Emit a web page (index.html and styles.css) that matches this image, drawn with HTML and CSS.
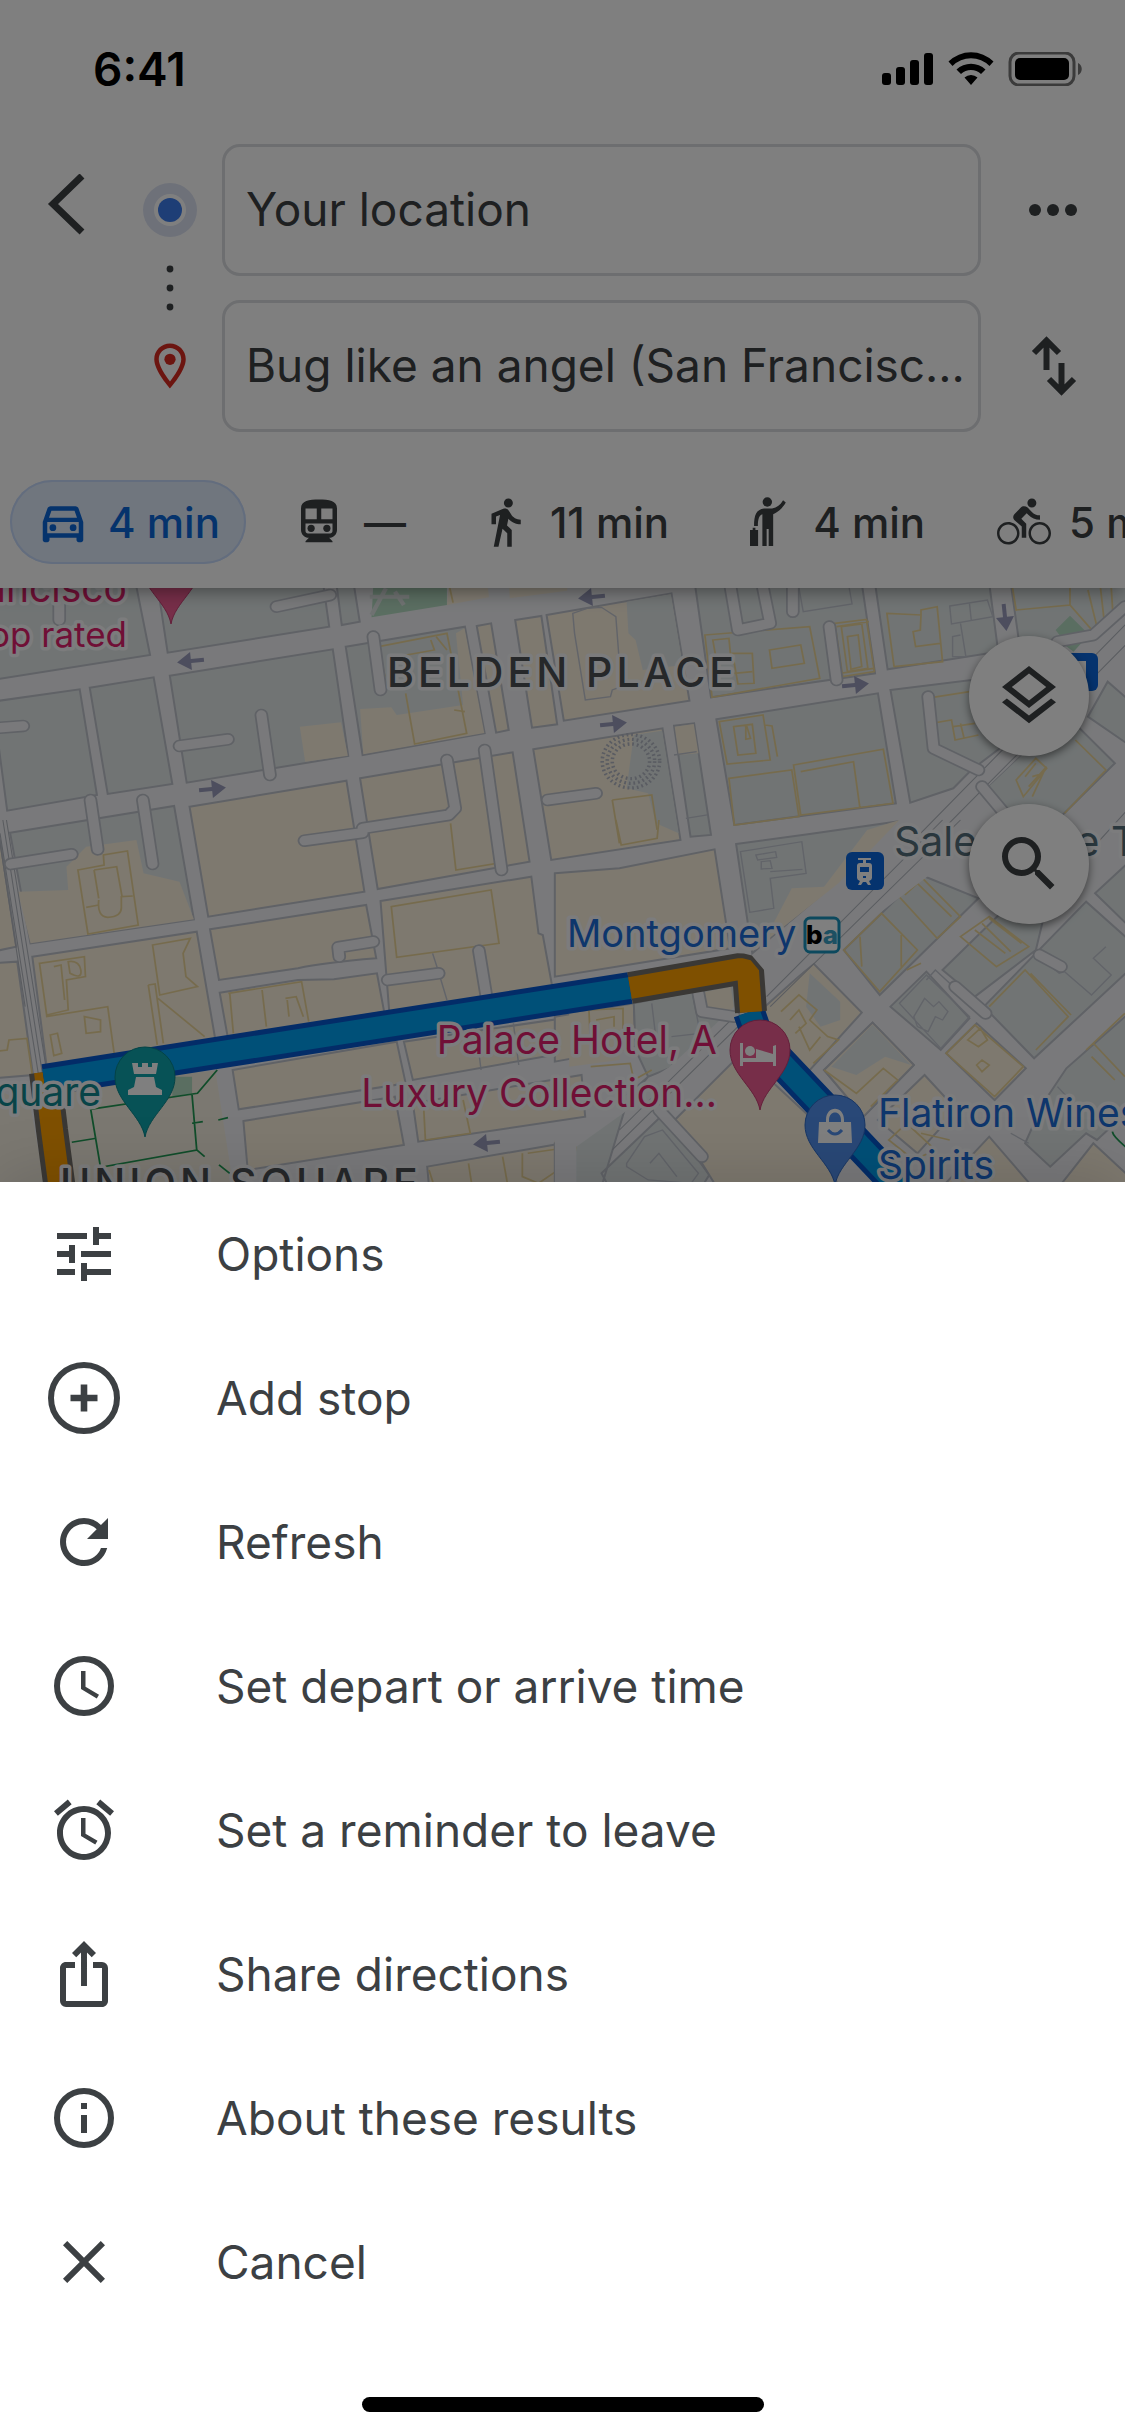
FILE: index.html
```html
<!DOCTYPE html>
<html lang="en">

<head>
    <meta charset="UTF-8">
    <meta name="viewport" content="width=device-width, initial-scale=1.0">
    <title>Directions</title>
    <link rel="stylesheet" href="styles.css">
</head>

<body>
    <div class="backdrop">
        <header class="header">
            <div class="status-bar">
                <span class="clock">6:41</span>
                <svg class="status-icons" width="200" height="34" viewBox="0 0 200 34" aria-hidden="true">
                    <rect x="0" y="21" width="9" height="12" rx="3" />
                    <rect x="14" y="15" width="9" height="18" rx="3" />
                    <rect x="28" y="8" width="9" height="25" rx="3" />
                    <rect x="42" y="1" width="9" height="32" rx="3" />
                    <path d="M66.5 9.500a32 32 0 0 1 45 0l-4 4.500a26 26 0 0 0-37 0zM74.5 17.500a21 21 0 0 1 29 0l-4.500 4.500a14.500 14.500 0 0 0-20 0zM82.5 25.500a9.500 9.500 0 0 1 13 0L89 33z" />
                    <rect class="battery-shell" x="128" y="1" width="64" height="32" rx="9" />
                    <rect x="133" y="6" width="54" height="22" rx="5" />
                    <path class="battery-cap" d="M196 11c5 2 5 10 0 12z" />
                </svg>
            </div>

            <form class="route">
                <button type="button" class="icon-button back" aria-label="Back">
                    <svg width="72" height="72" viewBox="0 0 72 72"><path d="M59 2 30 30l29 28" fill="none" stroke="currentColor" stroke-width="7" /></svg>
                </button>
                <div class="route-line" aria-hidden="true">
                    <svg width="54" height="54" viewBox="0 0 54 54">
                        <circle class="halo" cx="27" cy="27" r="27" />
                        <circle class="ring" cx="27" cy="27" r="16" />
                        <circle class="dot" cx="27" cy="27" r="12" />
                    </svg>
                    <svg width="8" height="48" viewBox="0 0 8 48">
                        <circle cx="4" cy="5" r="3.4" />
                        <circle cx="4" cy="24" r="3.4" />
                        <circle cx="4" cy="43" r="3.4" />
                    </svg>
                    <svg class="pin" width="54" height="54" viewBox="0 0 24 24">
                        <path d="M12 2C8.13 2 5 5.13 5 9c0 5.25 7 13 7 13s7-7.75 7-13c0-3.87-3.13-7-7-7zM7 9c0-2.76 2.24-5 5-5s5 2.24 5 5c0 2.88-2.88 7.19-5 9.88C9.92 16.21 7 11.85 7 9z" />
                        <circle cx="12" cy="9" r="2.5" />
                    </svg>
                </div>
                <input class="field from" type="text" aria-label="Starting point" value="Your location">
                <input class="field to" type="text" aria-label="Destination" value="Bug like an angel (San Francisc...">
                <button type="button" class="icon-button more" aria-label="More options">
                    <svg width="72" height="72" viewBox="0 0 72 72">
                        <circle cx="18" cy="36" r="6" />
                        <circle cx="36" cy="36" r="6" />
                        <circle cx="54" cy="36" r="6" />
                    </svg>
                </button>
                <button type="button" class="icon-button swap" aria-label="Swap start and destination">
                    <svg width="72" height="72" viewBox="0 0 72 72">
                        <path d="M29.5 40V11M17 23l12.500-12.500L42 23M44.5 33v29M32 49l12.500 12.500L57 49" fill="none" stroke="currentColor" stroke-width="6" />
                    </svg>
                </button>
            </form>

            <nav class="modes" aria-label="Travel mode">
                <button type="button" class="mode active">
                    <svg width="54" height="54" viewBox="0 0 24 24">
                        <path d="M18.92 6.01C18.72 5.42 18.16 5 17.5 5h-11c-.66 0-1.21.42-1.42 1.01L3 12v8c0 .55.45 1 1 1h1c.55 0 1-.45 1-1v-1h12v1c0 .55.45 1 1 1h1c.55 0 1-.45 1-1v-8l-2.08-5.99zM6.85 7h10.29l1.08 3.11H5.77L6.85 7zM19 17H5v-5h14v5z" />
                        <circle cx="7.5" cy="14.5" r="1.5" />
                        <circle cx="16.5" cy="14.5" r="1.5" />
                    </svg>
                    4 min
                </button>
                <button type="button" class="mode" aria-label="Transit, no route">
                    <svg width="54" height="54" viewBox="0 0 24 24">
                        <path fill-rule="evenodd" d="M12 2c-4.420 0-8 .5-8 4v9.500C4 17.430 5.570 19 7.500 19L6 20.500v.5h12v-.5L16.500 19c1.930 0 3.500-1.570 3.500-3.500V6c0-3.500-3.580-4-8-4zM6 6h5v4.800H6zM13 6h5v4.800h-5zM6 12.700h12V16c0 .6-.5 1.100-1.100 1.100H7.100C6.500 17.100 6 16.600 6 16z" />
                        <circle cx="8.5" cy="14.8" r="1.6" />
                        <circle cx="15.5" cy="14.8" r="1.6" />
                    </svg>
                    —
                </button>
                <button type="button" class="mode">
                    <svg width="54" height="54" viewBox="0 0 24 24">
                        <path d="M13.5 5.500c1.100 0 2-.9 2-2s-.9-2-2-2-2 .9-2 2 .9 2 2 2zM9.800 8.900L7 23h2.100l1.800-8 2.100 2v6h2v-7.500l-2.100-2 .6-3C14.800 12 16.800 13 19 13v-2c-1.900 0-3.500-1-4.300-2.400l-1-1.600c-.4-.6-1-1-1.700-1-.3 0-.5.1-.8.1L6 8.300V13h2V9.600l1.800-.7" />
                    </svg>
                    11 min
                </button>
                <button type="button" class="mode">
                    <svg width="54" height="54" viewBox="0 0 24 24">
                        <circle cx="11.7" cy="3.1" r="2.1" />
                        <path d="M10.200 6h3.600c2.200-.4 3.700-1.600 4.900-3.700l1.200 1c-1.400 2.400-3.200 4.200-5.600 5.200v14.200h-2v-7.600h-.9v7.600H9.500V8.500c-1.400.6-2 1.900-2 5.300H5.800c0-5 1-7.300 4.400-7.800zM4 15.600h1.200v-1h1.200v1h1.200v7.100H4z" />
                    </svg>
                    4 min
                </button>
                <button type="button" class="mode">
                    <svg width="54" height="54" viewBox="0 0 24 24">
                        <path d="M15.500 5.500c1.100 0 2-.9 2-2s-.9-2-2-2-2 .9-2 2 .9 2 2 2zM5 12c-2.800 0-5 2.200-5 5s2.200 5 5 5 5-2.200 5-5-2.200-5-5-5zm0 8.900c-2.100 0-3.900-1.800-3.900-3.900s1.800-3.900 3.900-3.900 3.900 1.800 3.900 3.900-1.800 3.900-3.900 3.900zm5.800-10.400l2.400-2.400.8.8c1.300 1.300 3 2.100 5.100 2.100V9c-1.500 0-2.700-.6-3.600-1.500l-1.900-1.900c-.5-.4-1-.6-1.600-.6s-1.100.2-1.400.6L7.800 8.400c-.4.4-.6.9-.6 1.400 0 .6.2 1.100.6 1.400L11 14v5h2v-6.200l-2.200-2.300zM19 12c-2.800 0-5 2.200-5 5s2.200 5 5 5 5-2.200 5-5-2.200-5-5-5zm0 8.900c-2.100 0-3.900-1.800-3.900-3.900s1.800-3.900 3.900-3.900 3.900 1.800 3.900 3.900-1.800 3.900-3.900 3.900z" />
                    </svg>
                    5 min
                </button>
            </nav>
        </header>

        <main class="map">
            <svg class="map-canvas" viewBox="0 588 1125 594" preserveAspectRatio="xMidYMid slice" role="img" aria-label="Route map">
                <defs>
                    <path id="alleys-nw" d="M920 405 770 440M165 400v80M-20 805 65 798M500 858 635 838M728 765 752 945M1040 530 1060 690" />
                    <path id="alleys-sw" d="M252-60 272 88M398-60 425 132M30 132 200 103M848 62 1010 38M1010 25 1250-15 1268-35 1245-180M1350-210 1397 150M1080 480 1222 460M1334 392 1355 530M945 410 942 382 1040 365" />
                    <path id="alleys-ne" d="M470 384 490 510 580 490 560 384M643 370V455M765 660 745 500M1020 710 1035 865 1160 930M1568 440 1480 525 1380 545M-40 1020 95 1000M1170 980 1240 1070" />
                    <path id="alleys-se" d="M1095 500 1180 580M380 520 390 575 480 590M270 870 390 1010M1330 405 1390 440" />
                    <path id="marker" d="M0 60C-4 38-30 24-30 0a30 30 0 1 1 60 0C30 24 4 38 0 60z" />
                    <path id="arrow" d="M-13-2H0v-7L14 0 0 9V2h-13z" />
                </defs>
                <rect class="street" x="0" y="588" width="1125" height="594" />

                <!-- north-west -->
                <g transform="translate(0 460) scale(.359 .3333)">
                    <path class="land" d="M-20 370H378L418 585-20 660zM438 370H900L917 500 467 578zM937 370H985L1002 485 952 495zM-20 725 222 688 270 1005 20 1052zM250 683 428 652 480 972 300 1002zM473 647 927 568 970 888 520 968zM963 560 1295 500 1350 820 1010 885z" />
                    <path class="shop" d="M1250 370H1358L1362 412 1245 435zM1417 370H1580V392L1420 415zM835 800 950 787 969 887 850 905zM1003 747 1090 742 1105 765 1290 735 1270 520 1294 505 1349 819 1012 883z" />
                    <path class="park" d="M1040 370H1245V435L1035 472z" />
                    <path class="footway" d="M1030 410H1140M1075 385 1035 465M1100 395 1125 435" />
                    <path class="shop edge" d="M1328 498 1368 490 1417 810 1382 818zM1435 480 1508 468 1552 793 1482 803z" />
                    <path class="building" d="M1055 560 1245 520 1300 820 1155 852 1130 700M1055 560 1072 650M1200 540 1210 570 1080 595M1215 530 1245 570M1265 750 1295 755M1250 370 1262 428" />
                    <use href="#alleys-nw" class="casing" />
                    <use href="#alleys-nw" class="alley" />
                </g>

                <!-- south-west -->
                <g transform="translate(0 820) scale(.359 .3333)">
                    <path class="land" d="M28 38 485-42 540 298 85 370z" />
                    <path class="shop" d="M50 215 190 210 185 140 240 80 380 60 400 160 500 185 540 298 85 370z" />
                    <path class="shop edge" d="M-20 20 0 60 45 380-20 395zM528-40 965-118 1015 215 580 290zM1003-125 1428-203 1475 125 1052 207zM90 410 548 335 600 660 130 740zM585 328 1020 255 1048 415Q900 428 830 445L610 480zM612 518 830 480 930 478 1050 460 1070 575 635 655zM1060 243 1480 170 1500 340 1512 345 1540 510 1085 585zM-20 430 48 425 92 765-20 775zM648 750 1105 665 1130 790 665 868zM678 903 1100 830 1125 975 690 1050zM1125 665 1600 590 1620 690 1150 780zM1150 850 1620 765 1630 890 1165 965zM1190 1040 1620 960V1100H1195z" />
                    <path class="square" d="M-20 800 85 860 125 1100H-20zM135 790 600 752 650 1100H205z" />
                    <path class="park" d="M480 770H535V820L480 830z" />
                    <path class="building" d="M217 150 290 135 288 105 355 93 385 315 245 342zM262 150 325 140 340 230 370 228M262 150 275 235M240 262 275 255M275 240Q270 290 300 292 340 290 338 260V228M425 375 530 355 510 400 518 470 550 500 445 525zM413 495 432 492 455 670M413 495 438 675M440 535 570 650M110 430 235 410 238 470 185 480 190 570 130 585zM128 590 300 560 318 700M235 590 280 600V635L240 640zM140 645 160 640 172 700 150 707zM150 440 170 435 180 540M190 425Q220 420 225 450T195 460zM-20 695 20 690 25 660 75 655 90 765M636 520 840 485 860 605M730 510 742 620M795 535 825 530 845 590M800 540 805 590M640 520 650 640M1090 260 1368 210 1390 370 1105 412zM1255 10 1270 150 1385 130 1365-80M1180 860 1185 960 1310 940 1290 840M1195 1050 1210 1100M1305 1030 1315 1100M1400 1010 1415 1100M1455 1000V1070L1500 1090 1568 1040M1470 1000 1568 985" />
                    <path class="lot" d="M1205 400 1220 450 1245 540M1325 620 1340 750M1430 610 1445 735" />
                    <path class="rail" d="M0 40 108 770M8 0 118 760M18 0 128 740M-10 0 70 560" />
                    <path class="path" d="M250 868 550 820 605 750M535 825 548 990 280 1042 253 870M535 910 565 905M608 900 635 893M548 990 570 1010M610 1035 640 1060M200 967 268 955" />
                    <use href="#alleys-sw" class="casing" />
                    <use href="#alleys-sw" class="alley" />
                </g>

                <!-- north-east -->
                <g transform="translate(562 460) scale(.359 .3333)">
                    <path class="shop edge" d="M-43 465 305 400 355 722 5 782zM-80 868 280 805 330 1140-30 1200z" />
                    <path class="land" d="M370 370H835L872 640 415 712zM872 370H1190L1215 575 907 628zM1250 370H1590V400L1480 520 1275 560zM430 778 880 700 930 1030 480 1095zM915 690 1140 660 1250 840 1140 930 1090 985 970 1028zM312 797 368 790 415 1125 358 1130zM1465 770 1520 665 1600 740V870zM1180 985 1400 760 1540 910 1380 1080 1230 1090z" />
                    <path class="ground" d="M180 425 303 403 336 615 225 630 205 540 185 520zM200 825 279 812 325 1120 262 1090 240 1000 180 985z" />
                    <path class="shop" d="M314 800 367 792 380 880 325 885z" />
                    <path class="park" d="M1375 510 1415 467 1460 515 1400 545zM1400 555 1450 545 1425 575z" />
                    <path class="lot" d="M30 460 70 445 110 442 150 470 165 680 140 690 135 710 65 720 35 520zM660 384 672 455 808 432 800 384M1080 438 1185 420 1200 470 1085 492zM1135 430 1140 480M1110 490 1125 590 1088 590V530L1110 525M312 885 375 875M345 1075 405 1065" />
                    <g class="plaza">
                        <circle cx="192" cy="904" r="52" />
                        <circle cx="192" cy="904" r="66" />
                        <circle cx="192" cy="904" r="80" />
                    </g>
                    <path class="building" d="M398 525 690 500 718 655 418 712zM420 540 465 535 470 590 430 600zM475 580 530 580 535 670 490 672zM480 640 530 635M578 570 665 555 675 610 585 625zM760 490 848 478 870 635 782 650zM778 500 835 492 852 625 795 635zM795 530 825 525 835 620 805 628zM765 500 855 485M775 640 868 625M905 460 1000 465V450L1045 440 1060 605 925 620zM1000 465 998 510 978 515 985 560 1053 550M1255 384 1265 450 1415 435V384M1415 435 1480 515M1465 390 1490 500M1500 384 1510 480M1530 384 1535 470M438 785 560 765 580 900 460 912zM478 800 530 793 540 880 490 885zM565 795 585 798 600 890M515 800 525 835 512 838V800zM465 955 640 930 660 1070 480 1095zM645 915 895 868 922 1030 665 1065zM665 935 812 905 830 1045M1015 715 1135 695M1015 715 1030 790 1085 780 1095 840 1160 825M1090 800 1150 790M1110 790 1120 835M1430 840 1515 930 1400 1060M1265 960 1320 895 1350 925 1285 1010zM1290 950 1320 910M1300 980 1350 920M1310 950 1340 940 1310 1010M140 1020 250 1005 265 1110M140 1020 160 1150" />
                    <path class="street" d="M1568 450 1700 450 1060 1110H980L1330 765z" />
                    <path class="rail" d="M1600 460 990 1130M1620 500 1060 1110" />
                    <use href="#alleys-ne" class="casing" />
                    <use href="#alleys-ne" class="alley" />
                </g>

                <!-- south-east -->
                <g transform="translate(562 820) scale(.359 .3333)">
                    <path class="shop edge" d="M-20 160 160 145 425 88 468 385-20 470zM-20 590 200 550 205 680-20 725z" />
                    <path class="land" d="M485 72 690 42 930 5 760 190 530 400zM200 550 480 490 500 590 310 740 240 770 205 690zM785 390 1000 165 1160 235 885 525zM1060 450 1250 250 1340 300 1320 390 1150 530zM915 560 1015 455 1135 595 1055 690zM1175 560 1460 245 1590 370V440L1315 715zM1485 220 1590 115V330zM730 750 865 608 980 735 840 890zM1340 850 1405 745 1600 560V850L1490 960 1460 940 1360 1040 1290 970zM50 950 240 770 180 850 110 1100H-20V970zM110 1060 285 880 410 1065 390 1100H130z" />
                    <path class="shop" d="M640 205 730 200 850 30 940 0 770 190 560 370zM380 520 470 500 480 570 400 580zM20 580 170 560 160 720 20 740z" />
                    <path class="shop edge" d="M565 560 700 430 835 578 640 810 570 700zM1070 700 1155 610 1292 745 1205 840zM300 915 500 700 700 900 770 1100H430L350 960zM880 900 1010 765 1100 870 990 1000zM1060 1100 1190 950 1310 1100zM1385 1100 1480 970 1590 1080V1100z" />
                    <path class="shop edge" d="M730 750 865 608 980 735 840 890z" />
                    <path class="ground" d="M690 460 775 545 775 600 720 620 680 560zM750 740 865 614 972 735 900 710 820 765z" />
                    <path class="lot" d="M497 95 668 65 680 160 580 175 590 265 523 277zM540 105 595 95 598 112 545 120zM555 125 580 122 585 145 555 147zM580 155 670 148M250 550 260 640 310 740M365 530 385 640 305 650M940 550 1015 465 1135 590 1055 685zM980 590 1010 535 1035 560 1050 545 1075 575 1060 600 1040 590 1020 635 990 620zM1015 480 1040 450 1110 520 1090 500Q1075 490 1090 485M1320 405 1385 460 1400 455 1475 525 1530 465 1480 415 1515 380M180 1030 230 950 280 930 380 1060 360 1090 240 1080 180 1040zM245 1030 270 1000 320 1070M1250 940 1300 970M1380 800 1450 880" />
                    <path class="building" d="M935 225 995 165 1110 290 1045 355zM955 225 990 190 1085 290M785 390 890 280 990 390 885 515zM830 350 835 440M945 345V440M960 450 1000 430M1110 350 1190 290 1300 380 1210 440zM1150 330 1235 400M1170 310 1250 395M1190 295 1280 370M1190 560 1290 450 1410 590 1320 690M1305 460 1418 585M610 575 660 525 710 570 690 600 740 650 770 660 700 730M635 600 660 570 680 610 650 640M660 620 690 690 720 650M1070 700 1150 615 1285 740 1205 830zM1130 660 1165 625 1185 660 1160 680zM1155 735 1170 720 1190 735 1170 755zM1460 690 1568 580M1475 710 1540 780M1480 670 1568 770M730 750 820 820 895 745 935 780 860 860M75 570 170 565V690L80 690zM95 600 145 590V620M80 740 190 730 200 780 250 750M150 0 165 75 265 55 270 0M-20 965 40 960 30 1060-20 1095M910 960 960 910 1040 990 980 1020zM1000 940 1080 960" />
                    <path class="street" d="M1060 20 1140 70 700 430 300 780 40 980V1100H-20V960L300 740 560 480z" />
                    <path class="rail" d="M1060 0 570 530M1110 0 580 560M480 590 160 930M490 620 140 990M1600-60 1490 70" />
                    <path class="path" d="M1533 935Q1535 950 1575 985" />
                    <use href="#alleys-se" class="casing" />
                    <use href="#alleys-se" class="alley" />
                </g>

                <g class="arrows">
                    <use href="#arrow" transform="translate(191 661) rotate(174)" />
                    <use href="#arrow" transform="translate(212 789) rotate(-6)" />
                    <use href="#arrow" transform="translate(592 597) rotate(174)" />
                    <use href="#arrow" transform="translate(613 724) rotate(-6)" />
                    <use href="#arrow" transform="translate(855 685) rotate(-6)" />
                    <use href="#arrow" transform="translate(1005 617) rotate(84)" />
                    <use href="#arrow" transform="translate(487 1143) rotate(174)" />
                </g>

                <!-- route: casing first, then the traffic colour -->
                <g class="route-shape">
                    <path class="slow-case" d="M45 1072 52 1130 60 1190" />
                    <path class="slow" d="M45 1072 52 1130 60 1190" />
                    <path class="clear-case" d="M44 1080 630 988M749 1012 758 1038 902 1190" />
                    <path class="clear" d="M44 1080 630 988M749 1012 758 1038 902 1190" />
                    <path class="slow-case" d="M630 988 740 969 748 971 751 1012" />
                    <path class="slow" d="M630 988 740 969 748 971 751 1012" />
                </g>

                <g class="station">
                    <rect x="846" y="852" width="38" height="38" rx="6" />
                    <rect x="1056" y="653" width="42" height="38" rx="6" />
                    <path fill-rule="evenodd" d="M858 858h13v2h-5v3h-3v-3h-5zM857 866q0-3 3-3h9q3 0 3 3v12q0 2-3 3l2 4h-3l-2-3h-3l-2 3h-3l2-4q-3-1-3-3zM860 867v5h9v-5zM863 876h3v2h-3zM1072 661h14v24h-5v-19h-9z" />
                </g>

                <use href="#marker" class="hotel" x="171" y="564" />
                <use href="#marker" class="hotel" x="760" y="1050" />
                <use href="#marker" class="store" x="835" y="1125" />
                <use href="#marker" class="sight" x="145" y="1077" />
                <path class="glyph" d="M740 1043h3v15h13v-9l17 5v-8l3-1v21h-3v-4h-30v4h-3z" />
                <circle class="glyph" cx="750" cy="1051" r="5" />
                <path class="glyph" fill-rule="evenodd" d="M826 1122v-2c0-15 18-15 18 0v2h7l1 21h-34l1-21zM829 1122h12v-2c0-10-12-10-12 0z" />
                <path class="smile" d="M828 1130q7 8 14 0" />
                <path class="glyph" d="M132 1063h6v4h4v-4h6v4h4v-4h6l-2 11h-22zM136 1077h18l2 10 6 3v5h-34v-5l6-3z" />

                <g class="label">
                    <text class="lodging" x="127" y="602" text-anchor="end">San Francisco</text>
                    <text class="lodging small" x="127" y="647" text-anchor="end">Top rated</text>
                    <text class="area" x="387" y="687">BELDEN PLACE</text>
                    <text class="area" x="60" y="1198">UNION SQUARE</text>
                    <text class="landmark" x="101" y="1106" text-anchor="end">Union Square</text>
                    <text class="lodging" x="717" y="1054" text-anchor="end">Palace Hotel, A</text>
                    <text class="lodging" x="717" y="1107" text-anchor="end">Luxury Collection...</text>
                    <text class="transit small" x="567" y="947">Montgomery</text>
                    <text class="tower" x="894" y="856">Salesforce Transit</text>
                    <text class="transit" x="878" y="1127">Flatiron Wines &amp;</text>
                    <text class="transit" x="878" y="1179">Spirits</text>
                </g>
                <g class="bart">
                    <rect x="805" y="918" width="34" height="34" rx="5" />
                    <text x="806" y="944">b<tspan>a</tspan></text>
                </g>
            </svg>
            <div class="map-buttons">
                <button type="button" class="round-button" aria-label="Layers">
                    <svg width="72" height="72" viewBox="0 0 24 24"><path d="M11.99 18.54l-7.37-5.73L3 14.07l9 7 9-7-1.63-1.27-7.38 5.74zM12 16l7.36-5.73L21 9l-9-7-9 7 1.63 1.27L12 16zm0-11.47L17.74 9 12 13.47 6.26 9 12 4.53z" /></svg>
                </button>
                <button type="button" class="round-button" aria-label="Search along route">
                    <svg width="72" height="72" viewBox="0 0 24 24"><path d="M15.5 14h-.79l-.28-.27A6.47 6.47 0 0 0 16 9.5 6.5 6.5 0 1 0 9.5 16c1.61 0 3.09-.59 4.23-1.57l.27.28v.79l5 4.99L20.49 19l-4.99-5zm-6 0C7.01 14 5 11.99 5 9.5S7.01 5 9.5 5 14 7.01 14 9.5 11.99 14 9.5 14z" /></svg>
                </button>
            </div>
        </main>
        <div class="scrim"></div>
    </div>

    <section class="sheet" aria-label="Route options">
        <ul class="menu">
            <li><button type="button" class="menu-item">
                <svg width="72" height="72" viewBox="0 0 24 24"><path d="M3 17v2h6v-2H3zM3 5v2h10V5H3zm10 16v-2h8v-2h-8v-2h-2v6h2zM7 9v2H3v2h4v2h2V9H7zm14 4v-2H11v2h10zm-6-4h2V7h4V5h-4V3h-2v6z" /></svg>
                Options
            </button></li>
            <li><button type="button" class="menu-item">
                <svg width="72" height="72" viewBox="0 0 24 24"><circle cx="12" cy="12" r="11" fill="none" stroke="currentColor" stroke-width="2" /><path d="M10.9 7.5h2.2v3.4h3.4v2.2h-3.4v3.4h-2.2v-3.4H7.5v-2.2h3.4z" /></svg>
                Add stop
            </button></li>
            <li><button type="button" class="menu-item">
                <svg width="72" height="72" viewBox="0 0 24 24"><path d="M17.65 6.35A7.958 7.958 0 0 0 12 4c-4.42 0-7.99 3.58-7.99 8s3.57 8 7.99 8c3.73 0 6.84-2.55 7.73-6h-2.08A5.99 5.99 0 0 1 12 18c-3.31 0-6-2.69-6-6s2.69-6 6-6c1.66 0 3.14.69 4.22 1.78L13 11h7V4l-2.35 2.35z" /></svg>
                Refresh
            </button></li>
            <li><button type="button" class="menu-item">
                <svg width="72" height="72" viewBox="0 0 24 24"><circle cx="12" cy="12" r="9" fill="none" stroke="currentColor" stroke-width="2" /><path d="M12.5 7H11v6l5.25 3.15.75-1.23-4.5-2.67z" /></svg>
                Set depart or arrive time
            </button></li>
            <li><button type="button" class="menu-item">
                <svg width="72" height="72" viewBox="0 0 24 24"><path d="M22 5.72l-4.6-3.86-1.29 1.53 4.6 3.86L22 5.72zM7.88 3.39L6.6 1.86 2 5.71l1.29 1.53 4.59-3.85zM12.5 8H11v6l4.75 2.85.75-1.23-4-2.37V8zM12 4c-4.97 0-9 4.03-9 9s4.02 9 9 9a9 9 0 0 0 0-18zm0 16c-3.87 0-7-3.13-7-7s3.13-7 7-7 7 3.13 7 7-3.13 7-7 7z" /></svg>
                Set a reminder to leave
            </button></li>
            <li><button type="button" class="menu-item">
                <svg width="72" height="72" viewBox="0 0 24 24"><path d="M16 5l-1.42 1.42-1.59-1.59V16h-1.98V4.83L9.42 6.42 8 5l4-4 4 4zm4 5v11c0 1.1-.9 2-2 2H6a2 2 0 0 1-2-2V10c0-1.11.89-2 2-2h3v2H6v11h12V10h-3V8h3a2 2 0 0 1 2 2z" /></svg>
                Share directions
            </button></li>
            <li><button type="button" class="menu-item">
                <svg width="72" height="72" viewBox="0 0 24 24"><circle cx="12" cy="12" r="9" fill="none" stroke="currentColor" stroke-width="2" /><path d="M11 7h2v2h-2zM11 11h2v6h-2z" /></svg>
                About these results
            </button></li>
            <li><button type="button" class="menu-item">
                <svg width="72" height="72" viewBox="0 0 24 24"><path d="M19 6.41L17.59 5 12 10.59 6.41 5 5 6.41 10.59 12 5 17.59 6.41 19 12 13.41 17.59 19 19 17.59 13.41 12z" /></svg>
                Cancel
            </button></li>
        </ul>
        <div class="home-indicator"></div>
    </section>
</body>

</html>
```
FILE: styles.css
```css
* {
    box-sizing: border-box;
}

body {
    margin: 0;
    min-height: 100vh;
    display: flex;
    flex-direction: column;
    font-family: Inter, "Liberation Sans", sans-serif;
    color: #3c4043;
    background: #fff;
}

button {
    border: 0;
    padding: 0;
    background: none;
    font: inherit;
    color: inherit;
    cursor: pointer;
}

svg {
    display: block;
    flex: none;
    fill: currentColor;
}

.backdrop {
    position: relative;
    flex: 1;
    display: flex;
    flex-direction: column;
    overflow: hidden;
}

/* dims everything behind the sheet */
.scrim {
    position: absolute;
    inset: 0;
    z-index: 3;
    background: rgba(0, 0, 0, 0.5);
}

.header {
    position: relative;
    z-index: 2;
    padding-bottom: 24px;
    background: #fff;
    box-shadow: 0 2px 18px rgba(0, 0, 0, 0.45);
}

.status-bar {
    display: flex;
    align-items: center;
    justify-content: space-between;
    height: 144px;
    padding: 0 43px 6px 93px;
    color: #000;
}

.clock {
    font-size: 46px;
    font-weight: 600;
}

.battery-shell {
    fill: none;
    stroke: #777;
    stroke-width: 3;
}

.battery-cap {
    fill: #777;
}

.route {
    display: grid;
    grid-template-columns: 118px 104px 1fr 144px;
    grid-template-rows: 132px 132px;
    row-gap: 24px;
}

.icon-button {
    display: grid;
    place-items: center;
}

.back {
    grid-area: 1 / 1;
}

.route-line {
    grid-area: 1 / 2 / 3 / 3;
    display: flex;
    flex-direction: column;
    align-items: center;
    justify-content: space-between;
    padding: 39px 0;
}

.halo {
    fill: #dde3f3;
}

.ring {
    fill: #fff;
}

.dot {
    fill: #3c7cec;
}

.pin {
    color: #d92b20;
}

.field {
    min-width: 0;
    width: 100%;
    padding: 0 8px 2px 21px;
    border: 3px solid #dadce0;
    border-radius: 18px;
    background: #fff;
    font: inherit;
    font-size: 46px;
    color: inherit;
    text-overflow: ellipsis;
}

.from {
    grid-area: 1 / 3;
}

.to {
    grid-area: 2 / 3;
}

.more {
    grid-area: 1 / 4;
}

.swap {
    grid-area: 2 / 4;
}

.modes {
    display: flex;
    gap: 20px;
    margin-top: 48px;
    padding-left: 10px;
    overflow: hidden;
}

.mode {
    flex: none;
    display: flex;
    align-items: center;
    gap: 18px;
    height: 84px;
    padding: 0 26px;
    border-radius: 42px;
    font-size: 42px;
    font-weight: 500;
    white-space: nowrap;
}

.mode.active {
    color: #0b66d8;
    background: #e0ecfc;
    box-shadow: inset 0 0 0 2px #c6dafc;
}

.map {
    position: relative;
    flex: 1;
}

.map-canvas {
    position: absolute;
    inset: 0;
    width: 100%;
    height: 100%;
}

.street {
    fill: #f2f3f6;
}

.land {
    fill: #e2e9e9;
    stroke: #c0c4cd;
    stroke-width: 2;
    vector-effect: non-scaling-stroke;
}

.ground {
    fill: #e2e9e9;
}

.shop {
    fill: #fcf2df;
}

.edge {
    stroke: #c0c4cd;
    stroke-width: 2;
    vector-effect: non-scaling-stroke;
}

.square {
    fill: #f7f1e2;
}

.park {
    fill: #b5dcc3;
}

.footway,
.alley,
.casing,
.building,
.lot,
.rail,
.path,
.plaza,
.smile {
    fill: none;
}

.footway {
    stroke: #dfe5e4;
    stroke-width: 12;
}

.casing {
    stroke: #c0c4cd;
    stroke-width: 38;
    stroke-linecap: round;
    stroke-linejoin: round;
}

.alley {
    stroke: #f2f3f6;
    stroke-width: 28;
    stroke-linecap: round;
    stroke-linejoin: round;
}

.building {
    stroke: #edd79b;
    stroke-width: 5;
}

.lot {
    stroke: #c4c8d2;
    stroke-width: 4;
}

.plaza {
    stroke: #b4b8c4;
    stroke-width: 10;
    stroke-dasharray: 5 8;
}

.rail {
    stroke: #b4b8c0;
    stroke-width: 3;
}

.path {
    stroke: #219a55;
    stroke-width: 5;
}

.arrows {
    fill: #9a9cbc;
}

.route-shape path {
    fill: none;
    stroke-width: 22;
    stroke-linejoin: bevel;
}

.route-shape .clear-case {
    stroke: #0659d0;
    stroke-width: 32;
}

.route-shape .clear {
    stroke: #00a0f0;
}

.route-shape .slow-case {
    stroke: #74706a;
    stroke-width: 32;
}

.route-shape .slow {
    stroke: #ffa000;
}

.station {
    fill: #fff;
}

.station rect {
    fill: #0b66dc;
}

.hotel {
    fill: #ee5d92;
    stroke: #c63d72;
}

.store {
    fill: #5290ee;
    stroke: #2f6bc8;
}

.sight {
    fill: #0ea5ac;
    stroke: #08868c;
}

.glyph {
    fill: #fff;
}

.smile {
    stroke: #5290ee;
    stroke-width: 3;
}

.label {
    font-size: 39px;
    stroke: #f8f9fb;
    stroke-width: 7;
    stroke-linejoin: round;
    paint-order: stroke;
}

.label .small {
    font-size: 35px;
}

.label .transit.small {
    font-size: 38px;
}

.label .area {
    fill: #4c5054;
    font-size: 41px;
    font-weight: 500;
    letter-spacing: 4px;
}

.lodging {
    fill: #e01f6c;
}

.landmark {
    fill: #118891;
}

.transit {
    fill: #1c6dd8;
}

.label .tower {
    fill: #546e7a;
    font-size: 41px;
}

.bart rect {
    fill: #fff;
    stroke: #1893bd;
    stroke-width: 3;
}

.bart text {
    fill: #000;
    font-size: 26px;
    font-weight: 800;
}

.bart tspan {
    fill: #3aa0c4;
}

.map-buttons {
    position: absolute;
    top: 48px;
    right: 36px;
    display: grid;
    gap: 48px;
}

.round-button {
    display: grid;
    place-items: center;
    width: 120px;
    height: 120px;
    border-radius: 50%;
    background: #fff;
    box-shadow: 0 3px 9px rgba(0, 0, 0, 0.5);
}

.sheet {
    position: relative;
    z-index: 4;
    background: #fff;
    box-shadow: 0 -4px 60px rgba(0, 0, 0, 0.15);
}

.menu {
    margin: 0;
    padding: 0;
    list-style: none;
}

.menu-item {
    display: flex;
    align-items: center;
    gap: 96px;
    width: 100%;
    height: 144px;
    padding: 0 48px;
    font-size: 46px;
    text-align: left;
}

.home-indicator {
    width: 402px;
    height: 15px;
    margin: 63px auto 24px;
    border-radius: 8px;
    background: #000;
}
```
